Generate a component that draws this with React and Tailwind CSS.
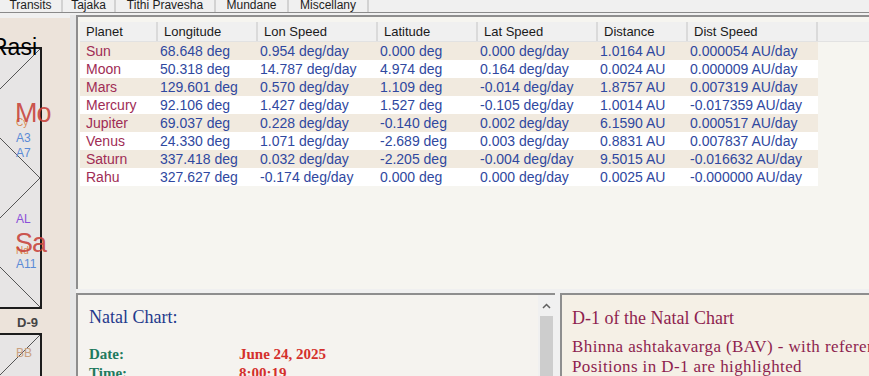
import React from 'react'

// Planet table data
const rows = [
    ['Sun', '68.648 deg', '0.954 deg/day', '0.000 deg', '0.000 deg/day', '1.0164 AU', '0.000054 AU/day'],
    ['Moon', '50.318 deg', '14.787 deg/day', '4.974 deg', '0.164 deg/day', '0.0024 AU', '0.000009 AU/day'],
    ['Mars', '129.601 deg', '0.570 deg/day', '1.109 deg', '-0.014 deg/day', '1.8757 AU', '0.007319 AU/day'],
    ['Mercury', '92.106 deg', '1.427 deg/day', '1.527 deg', '-0.105 deg/day', '1.0014 AU', '-0.017359 AU/day'],
    ['Jupiter', '69.037 deg', '0.228 deg/day', '-0.140 deg', '0.002 deg/day', '6.1590 AU', '0.000517 AU/day'],
    ['Venus', '24.330 deg', '1.071 deg/day', '-2.689 deg', '0.003 deg/day', '0.8831 AU', '0.007837 AU/day'],
    ['Saturn', '337.418 deg', '0.032 deg/day', '-2.205 deg', '-0.004 deg/day', '9.5015 AU', '-0.016632 AU/day'],
    ['Rahu', '327.627 deg', '-0.174 deg/day', '0.000 deg', '0.000 deg/day', '0.0025 AU', '-0.000000 AU/day'],
]

const headers = ['Planet', 'Longitude', 'Lon Speed', 'Latitude', 'Lat Speed', 'Distance', 'Dist Speed']
const widths = ['w-[78px]', 'w-[100px]', 'w-[120px]', 'w-[100px]', 'w-[120px]', 'w-[90px]', 'w-[130px]']

const tabs = [
    { label: 'Transits', w: 'w-[63px]' },
    { label: 'Tajaka', w: 'w-[53px]' },
    { label: 'Tithi Pravesha', w: 'w-[100px]' },
    { label: 'Mundane', w: 'w-[73px]' },
    { label: 'Miscellany', w: 'w-[80px]' },
]

// North Indian chart lines
const ChartLines = () => (
    <svg className="absolute inset-0" width="258" height="258" viewBox="0 0 258 258">
        <line x1="0" y1="0" x2="258" y2="258" stroke="#555" strokeWidth="1" />
        <line x1="258" y1="0" x2="0" y2="258" stroke="#555" strokeWidth="1" />
        <polygon points="129,0 258,129 129,258 0,129" fill="none" stroke="#555" strokeWidth="1" />
    </svg>
)

const App = () => {
    return (
        <div className="flex h-[376px] w-[869px] flex-col overflow-hidden bg-[#f0f0f0]" style={{ fontFamily: '"Liberation Sans", Arial, sans-serif' }}>
            {/* Tabs */}
            <div className="flex h-[13px] overflow-hidden border-b border-[#8a8a8a]">
                {tabs.map((t) => (
                    <div key={t.label} className={`${t.w} -mt-[2px] shrink-0 border-r-2 border-[#d2d2d2] text-center text-[12px] leading-[15px] text-[#1e1e1e]`}>
                        {t.label}
                    </div>
                ))}
            </div>

            <div className="flex min-h-0 flex-1 pt-[2px]">
                {/* Left chart panel */}
                <div className="mt-[3px] w-[70px] shrink-0 overflow-hidden bg-[#ece3da]">
                    <div className="-ml-[220px] flex w-[262px] flex-col">
                        <div className="relative z-10 h-[29px] pr-[5px] pt-[18px] text-right text-[23px] leading-[23px] text-black">Rasi</div>
                        <div className="relative h-[262px] w-[262px] border-2 border-[#1c1c1c] bg-[#e7e5e5]">
                            <ChartLines />
                            <span className="absolute left-[234px] top-[69px] text-[10px] leading-[10px] text-[#d9894f]">Cy</span>
                            <span className="absolute left-[233px] top-[51px] text-[27px] leading-[27px] tracking-[-1px] text-[#c8423a]/90">Mo</span>
                            <span className="absolute left-[234px] top-[83px] text-[12px] leading-[12px] text-[#5b8bd6]">A3</span>
                            <span className="absolute left-[234px] top-[98px] text-[12px] leading-[12px] text-[#5b8bd6]">A7</span>
                            <span className="absolute left-[234px] top-[164px] text-[12px] leading-[12px] text-[#8a4fd8]">AL</span>
                            <span className="absolute left-[234px] top-[197px] text-[10px] leading-[10px] text-[#d9894f]">Nd</span>
                            <span className="absolute left-[233px] top-[181px] text-[27px] leading-[27px] tracking-[-1px] text-[#c8423a]/90">Sa</span>
                            <span className="absolute left-[234px] top-[209px] text-[12px] leading-[12px] text-[#5b8bd6]">A11</span>
                        </div>
                        <div className="h-[24px] pr-[4px] pt-[2px] text-right text-[13px] font-bold leading-[24px] text-[#444]">D-9</div>
                        <div className="relative h-[262px] w-[262px] border-2 border-[#1c1c1c] bg-[#e7e5e5]">
                            <ChartLines />
                            <span className="absolute left-[234px] top-[12px] text-[12px] leading-[12px] text-[#c9a07e]">BB</span>
                        </div>
                    </div>
                </div>

                <div className="w-[6px] shrink-0 bg-[#e6e6e6]" />

                {/* Right column */}
                <div className="flex min-w-0 flex-1 flex-col">
                    {/* Table panel */}
                    <div className="h-[274px] shrink-0 border-l-2 border-t-2 border-[#8e8e8e] bg-[#f6f5f0] pl-[2px] pt-[5px]">
                        <div className="flex h-[20px] border-b border-[#e2e2e2] bg-[#f0f0f0] text-[13px] leading-[20px] text-[#1a1a1a]">
                            {headers.map((h, i) => (
                                <div key={h} className={`${widths[i]} shrink-0 border-r-2 border-[#dadada] pl-[6px]`}>{h}</div>
                            ))}
                            <div className="flex-1" />
                        </div>
                        {rows.map((r, ri) => (
                            <div key={r[0]} className={`flex h-[18px] w-[738px] text-[14px] leading-[18px] ${ri % 2 === 0 ? 'bg-[#f1eadf]' : 'bg-white'}`}>
                                {r.map((v, i) => (
                                    <div key={i} className={`${widths[i]} shrink-0 whitespace-nowrap ${i === 0 ? 'pl-[6px] text-[#a02c55]' : 'pl-[2px] text-[#2f48a0]'}`}>{v}</div>
                                ))}
                            </div>
                        ))}
                    </div>

                    <div className="h-[4px] shrink-0" />

                    {/* Bottom panels */}
                    <div className="flex min-h-0 flex-1" style={{ fontFamily: '"Liberation Serif", "Times New Roman", serif' }}>
                        <div className="flex w-[479px] shrink-0 border-l-2 border-t-2 border-[#8e8e8e] bg-[#f5f3ef]">
                            <div className="flex-1 pl-[11px] pt-[11px]">
                                <div className="text-[18px] leading-[22px] text-[#1f3a8c]">Natal Chart:</div>
                                <div className="mt-[17px] flex text-[15px] font-bold leading-[19px]">
                                    <span className="w-[150px] text-[#1e7a5e]">Date:</span>
                                    <span className="text-[#d4302c]">June 24, 2025</span>
                                </div>
                                <div className="flex text-[15px] font-bold leading-[19px]">
                                    <span className="w-[150px] text-[#1e7a5e]">Time:</span>
                                    <span className="text-[#d4302c]">8:00:19</span>
                                </div>
                            </div>
                            <div className="flex w-[17px] flex-col bg-[#f0f0f0]">
                                <div className="flex h-[21px] items-center justify-center">
                                    <svg width="9" height="6" viewBox="0 0 9 6">
                                        <path d="M1 5 L4.5 1.5 L8 5" fill="none" stroke="#606060" strokeWidth="1.5" />
                                    </svg>
                                </div>
                                <div className="mx-[2px] flex-1 bg-[#cdcdcd]" />
                            </div>
                        </div>
                        <div className="w-[5px] shrink-0" />
                        <div className="min-w-0 flex-1 overflow-hidden whitespace-nowrap border-l-2 border-t-2 border-[#8e8e8e] bg-[#f5f0e6] pl-[10px] pt-[13px] text-[#8e1f4f]">
                            <div className="text-[18px] leading-[20px]">D-1 of the Natal Chart</div>
                            <div className="mt-[9px] text-[17px] leading-[20px] tracking-[0.4px]">Bhinna ashtakavarga (BAV) - with reference to natal</div>
                            <div className="text-[17px] leading-[20px] tracking-[0.4px]">Positions in D-1 are highlighted</div>
                        </div>
                    </div>
                </div>
            </div>
        </div>
    )
}

export default App
